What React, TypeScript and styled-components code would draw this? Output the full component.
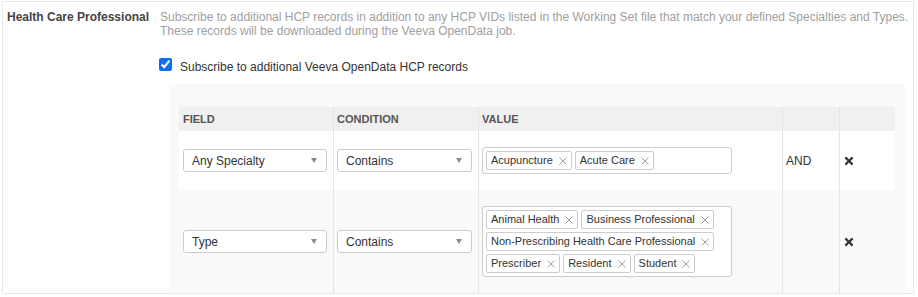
import React from "react";
import styled, { createGlobalStyle } from "styled-components";
import { FaTimes } from "react-icons/fa";

const GlobalStyle = createGlobalStyle`
  body {
    margin: 0;
    background: #fff;
    font-family: "Liberation Sans", Arial, sans-serif;
    color: #333;
  }
`;

const Section = styled.div`
  margin: 1px 4px 0 2px;
  border: 1px solid #e9e9e9;
  padding-top: 8px;
  display: grid;
  grid-template-columns: 157px 1fr;
`;

const Label = styled.div`
  padding-left: 4px;
  font-size: 12px;
  line-height: 14px;
  font-weight: bold;
  color: #444;
`;

const Content = styled.div`
  display: flex;
  flex-direction: column;
`;

const Description = styled.p`
  margin: 0;
  font-size: 12px;
  line-height: 14px;
  color: #a0a0a0;
`;

const CheckRow = styled.label`
  display: flex;
  align-items: flex-start;
  gap: 8px;
  margin-top: 20px;
  font-size: 12px;
  line-height: 18px;
  color: #333;
`;

const Checkbox = styled.input`
  margin: 0 0 0 -1px;
  width: 13px;
  height: 13px;
  accent-color: #0b6ef5;
`;

const Panel = styled.div`
  margin: 8px 8px 0 9px;
  padding: 23px 10px 0;
  background: #f9f9f9;
`;

const Row = styled.div<{ $variant: "head" | "white" | "plain" }>`
  display: grid;
  grid-template-columns: 154px 145px 304px 57px 56px;
  background: ${(p) =>
    p.$variant === "head" ? "#f0f0f0" : p.$variant === "white" ? "#fff" : "transparent"};
  min-height: ${(p) => (p.$variant === "head" ? "24px" : "auto")};
`;

const Cell = styled.div<{ $head?: boolean }>`
  display: flex;
  align-items: center;
  padding: ${(p) => (p.$head ? "0 4px" : "16px 4px")};
  font-size: ${(p) => (p.$head ? "11px" : "12px")};
  font-weight: ${(p) => (p.$head ? "bold" : "normal")};
  color: ${(p) => (p.$head ? "#555" : "#333")};
  & + & {
    box-shadow: inset 1px 0 0 #e4e4e4;
  }
`;

const Select = styled.div`
  box-sizing: border-box;
  width: calc(100% - 2px);
  height: 23px;
  display: flex;
  align-items: center;
  justify-content: space-between;
  padding: 0 9px 0 8px;
  background: #fff;
  border: 1px solid #ccc;
  border-radius: 3px;
  font-size: 12px;
  color: #333;
`;

const Caret = styled.span`
  width: 0;
  height: 0;
  border-left: 3px solid transparent;
  border-right: 3px solid transparent;
  border-top: 5px solid #8a8a8a;
`;

const TagBox = styled.div`
  box-sizing: border-box;
  width: 250px;
  display: flex;
  flex-wrap: wrap;
  gap: 3px;
  padding: 3px;
  background: #fff;
  border: 1px solid #ccc;
  border-radius: 3px;
`;

const Tag = styled.span`
  box-sizing: border-box;
  height: 19px;
  display: inline-flex;
  align-items: center;
  gap: 6px;
  padding: 0 4px;
  border: 1px solid #ccc;
  border-radius: 2px;
  background: #fff;
  font-size: 11px;
  line-height: 17px;
  color: #333;
  white-space: nowrap;
`;

const TagClose = () => (
  <svg width="8" height="8" viewBox="0 0 8 8">
    <path d="M0.5 0.5L7.5 7.5M7.5 0.5L0.5 7.5" stroke="#a0a0a0" strokeWidth="1" />
  </svg>
);

const Remove = styled(FaTimes)`
  color: #333;
`;

type Rule = {
  field: string;
  values: string[];
  joiner?: string;
  variant: "white" | "plain";
};

const rules: Rule[] = [
  { field: "Any Specialty", values: ["Acupuncture", "Acute Care"], joiner: "AND", variant: "white" },
  {
    field: "Type",
    values: [
      "Animal Health",
      "Business Professional",
      "Non-Prescribing Health Care Professional",
      "Prescriber",
      "Resident",
      "Student",
    ],
    variant: "plain",
  },
];

export default function App() {
  return (
    <>
      <GlobalStyle />
      <Section>
        <Label>Health Care Professional</Label>
        <Content>
          <Description>
            Subscribe to additional HCP records in addition to any HCP VIDs listed in the Working Set
            file that match your defined Specialties and Types.
            <br />
            These records will be downloaded during the Veeva OpenData job.
          </Description>
          <CheckRow>
            <Checkbox type="checkbox" checked readOnly />
            Subscribe to additional Veeva OpenData HCP records
          </CheckRow>
          <Panel>
            <Row $variant="head">
              <Cell $head>FIELD</Cell>
              <Cell $head>CONDITION</Cell>
              <Cell $head>VALUE</Cell>
              <Cell $head />
              <Cell $head />
            </Row>
            {rules.map((r) => (
              <Row key={r.field} $variant={r.variant}>
                <Cell>
                  <Select>
                    {r.field}
                    <Caret />
                  </Select>
                </Cell>
                <Cell>
                  <Select>
                    Contains
                    <Caret />
                  </Select>
                </Cell>
                <Cell>
                  <TagBox>
                    {r.values.map((v) => (
                      <Tag key={v}>
                        {v}
                        <TagClose />
                      </Tag>
                    ))}
                  </TagBox>
                </Cell>
                <Cell>{r.joiner}</Cell>
                <Cell>
                  <Remove size={12} />
                </Cell>
              </Row>
            ))}
          </Panel>
        </Content>
      </Section>
    </>
  );
}
